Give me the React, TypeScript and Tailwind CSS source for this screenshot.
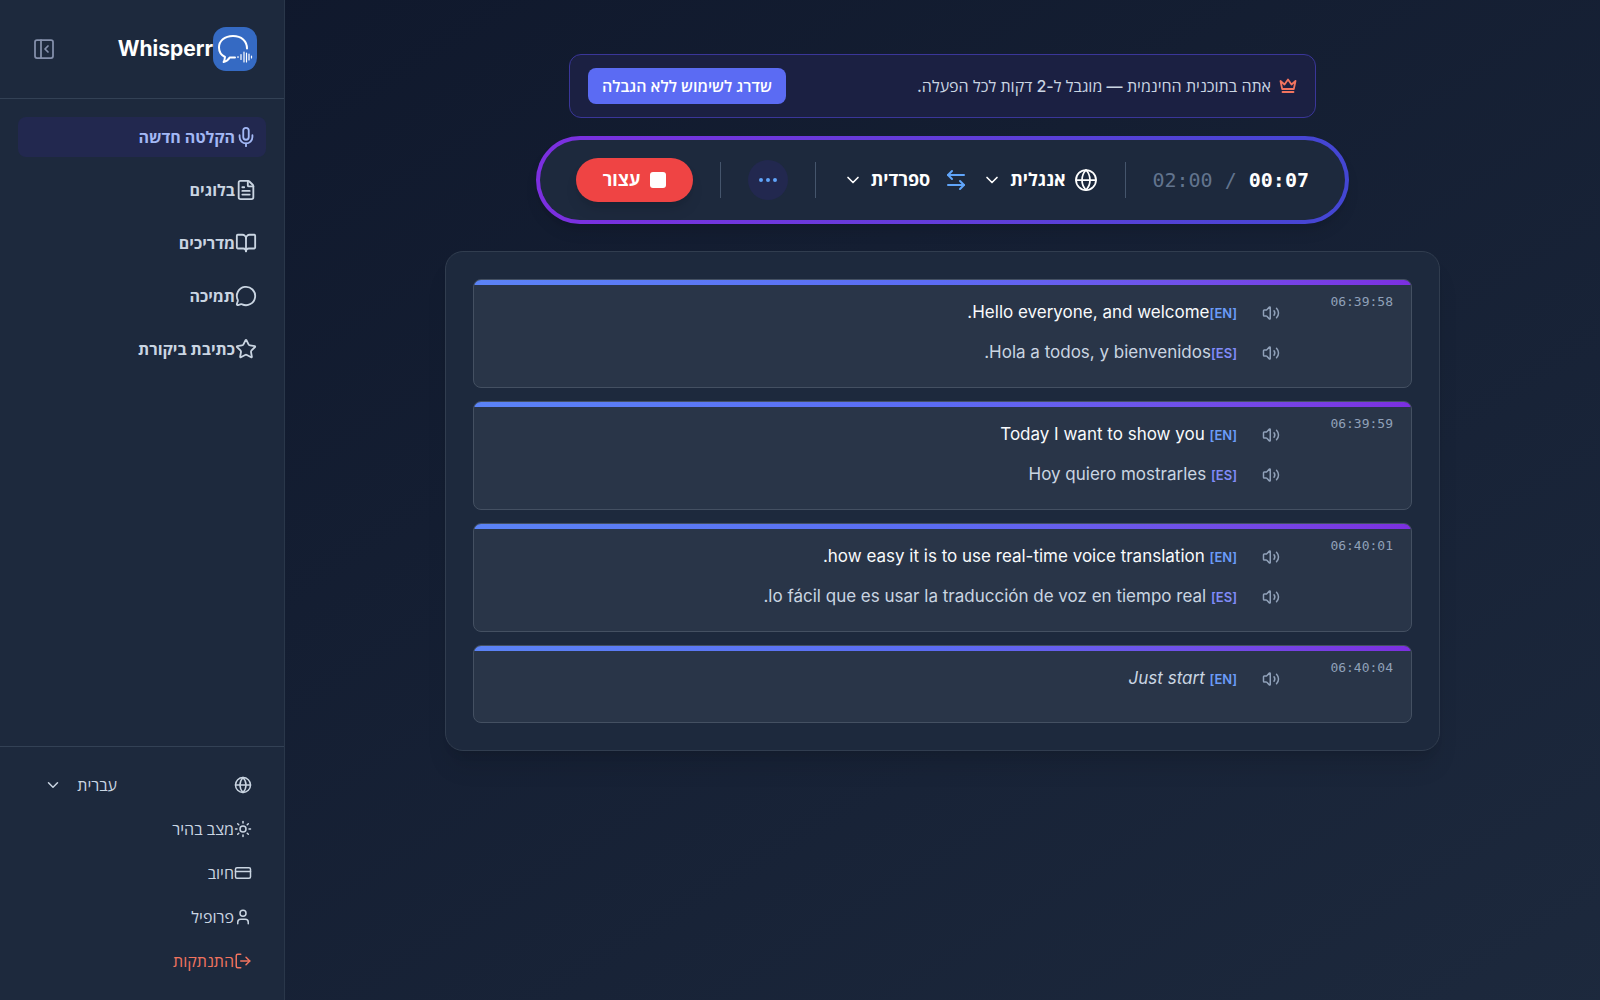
import React from "react";
import {
  ArrowLeftRight,
  BookOpen,
  ChevronDown,
  CreditCard,
  Ellipsis,
  FileText,
  Globe,
  LogOut,
  MessageCircle,
  Mic,
  PanelLeftClose,
  Star,
  Sun,
  User,
  Volume2,
} from "lucide-react";

type Line = { lang: "EN" | "ES"; text: string; interim?: boolean };
type Segment = { time: string; joined?: boolean; lines: Line[] };

const navItems = [
  { label: "הקלטה חדשה", icon: Mic, active: true },
  { label: "בלוגים", icon: FileText },
  { label: "מדריכים", icon: BookOpen },
  { label: "תמיכה", icon: MessageCircle },
  { label: "כתיבת ביקורת", icon: Star },
];

const accountItems = [
  { label: "מצב בהיר", icon: Sun },
  { label: "חיוב", icon: CreditCard },
  { label: "פרופיל", icon: User },
  { label: "התנתקות", icon: LogOut, danger: true },
];

const segments: Segment[] = [
  {
    time: "06:39:58",
    joined: true,
    lines: [
      { lang: "EN", text: "Hello everyone, and welcome." },
      { lang: "ES", text: "Hola a todos, y bienvenidos." },
    ],
  },
  {
    time: "06:39:59",
    lines: [
      { lang: "EN", text: "Today I want to show you" },
      { lang: "ES", text: "Hoy quiero mostrarles" },
    ],
  },
  {
    time: "06:40:01",
    lines: [
      { lang: "EN", text: "how easy it is to use real-time voice translation." },
      { lang: "ES", text: "lo fácil que es usar la traducción de voz en tiempo real." },
    ],
  },
  {
    time: "06:40:04",
    lines: [{ lang: "EN", text: "Just start", interim: true }],
  },
];

const Logo = () => (
  <svg width="44" height="44" viewBox="0 0 44 44" fill="none" stroke="white" strokeLinecap="round" strokeLinejoin="round">
    <rect width="44" height="44" rx="13" fill="#356ac3" stroke="none" />
    <path
      strokeWidth="2"
      d="M34 21.500C34 14 28.500 9 20 9S6 14 6 20.500c0 4 2 7.500 6 9.500-.2 2-.6 3.500-1.400 5 2.600-.6 4.700-2 6.100-4.500H22"
    />
    <path strokeWidth="1.200" d="M25 29.500v1M28 27.500v5M31 25v10M33.500 26v9M36 27v6M38.500 29v2" />
  </svg>
);

const Crown = () => (
  <svg
    width="18"
    height="16"
    viewBox="0 0 18 16"
    fill="none"
    stroke="currentColor"
    strokeWidth="1.800"
    strokeLinejoin="round"
    strokeLinecap="round"
    className="text-[#f2745f]"
  >
    <path d="M1.500 3l1.700 8h11.600l1.700-8-4 3.500L9 1.500 5.500 6.500zM3.500 14h11" />
  </svg>
);

const Sidebar = () => {
  return (
    <aside className="w-[285px] shrink-0 flex flex-col bg-slate-800 border-r border-[#2a374a]">
      <div className="h-[99px] flex items-center justify-between pr-[27px] pl-6 border-b border-[#334155]">
        <div className="flex items-center">
          <Logo />
          <span className="text-[21px] font-bold text-white">Whisperr</span>
        </div>
        <button aria-label="כווץ תפריט" className="p-2 text-[#8590ac]">
          <PanelLeftClose size={24} strokeWidth={1.75} />
        </button>
      </div>

      {/* NAV */}
      <nav className="flex-1 flex flex-col gap-[13px] px-[18px] pt-[18px]">
        {navItems.map(({ label, icon: Icon, active }) => (
          <a
            key={label}
            href="#"
            className={`h-10 flex items-center px-[9px] rounded-lg text-base font-bold ${
              active ? "bg-[#22284f] text-[#a3b8f5]" : "text-slate-300"
            }`}
          >
            <Icon size={22} />
            {label}
          </a>
        ))}
      </nav>

      {/* ACCOUNT */}
      <div className="flex flex-col gap-1 border-t border-[#334155] px-8 pt-[18px] pb-[19px]">
        <label className="relative h-10 flex items-center text-slate-300">
          <Globe size={18} />
          <select
            aria-label="שפה"
            className="appearance-none bg-transparent outline-none w-[168px] pr-[117px] text-base font-medium"
          >
            <option>עברית</option>
          </select>
          <ChevronDown size={18} className="absolute left-[12px] pointer-events-none" />
        </label>
        {accountItems.map(({ label, icon: Icon, danger }) => (
          <button
            key={label}
            className={`h-10 flex items-center text-base font-medium ${danger ? "text-[#f2745f]" : "text-slate-300"}`}
          >
            <Icon size={18} />
            {label}
          </button>
        ))}
      </div>
    </aside>
  );
};

const Divider = () => <div className="w-px h-9 bg-slate-600" />;

const SegmentCard = ({ segment }: { segment: Segment }) => {
  return (
    <article className="relative overflow-hidden flex rounded-lg border border-[#445062] bg-[#293548] px-[18px] pt-[13px] pb-[14px]">
      <div className="absolute inset-x-0 top-0 h-[5px] bg-linear-to-r from-[#5b83f6] via-[#5b6bf3] to-[#7c2fe0]" />
      <time className="w-[104px] shrink-0 pt-px font-[DejaVu_Sans_Mono,monospace] text-[13px] leading-4 text-slate-400">
        {segment.time}
      </time>
      <div className="flex-1 min-w-0 min-h-[49px]">
        {segment.lines.map((line) => (
          <div key={line.lang} className="h-10 flex items-center gap-4">
            <button aria-label="השמע" className="w-9 h-9 flex items-center justify-center text-slate-400">
              <Volume2 size={18} />
            </button>
            <p
              className={`text-[17px] ${
                line.interim ? "italic text-slate-300" : line.lang === "EN" ? "text-slate-50" : "text-slate-300"
              }`}
            >
              <span
                className={`text-[13px] font-semibold not-italic ${
                  line.lang === "EN" ? "text-[#6b9cf8]" : "text-[#818cf8]"
                }`}
              >
                [{line.lang}]
              </span>
              {segment.joined ? "" : " "}
              {line.text}
            </p>
          </div>
        ))}
      </div>
    </article>
  );
};

const App = () => {
  return (
    <div
      dir="rtl"
      className="min-h-screen flex flex-row-reverse bg-linear-to-br from-slate-900 to-slate-800 font-[Inter,Open_Sans,sans-serif]"
    >
      <Sidebar />
      <main className="flex-1 min-w-0 flex flex-col items-center px-6 pt-[54px] pb-10">
        {/* PLAN BANNER */}
        <section className="w-full max-w-[747px] h-16 flex items-center justify-between px-[18px] rounded-xl border border-[#3a3699] bg-[#1b2042]">
          <p className="flex items-center gap-2 text-base font-medium text-slate-300">
            <Crown />
            אתה בתוכנית החינמית — מוגבל ל-2 דקות לכל הפעלה.
          </p>
          <button className="h-9 px-[14px] rounded-lg bg-[#5b6bf3] text-base font-semibold text-white">
            שדרג לשימוש ללא הגבלה
          </button>
        </section>

        {/* CONTROLS */}
        <section className="mt-[18px] w-full max-w-[813px] rounded-full p-1 bg-linear-to-r from-[#7c2fe0] to-[#4346d3] shadow-lg">
          <div className="h-20 flex items-center justify-between px-9 rounded-full bg-slate-800">
            <p className="font-[DejaVu_Sans_Mono,monospace] text-xl text-slate-500" dir="ltr">
              02:00 / <span className="font-bold text-white">00:07</span>
            </p>
            <Divider />
            <div className="flex items-center gap-[14px]">
              <button className="flex items-center gap-2 text-lg font-bold text-white">
                <Globe size={24} strokeWidth={1.75} />
                אנגלית
                <ChevronDown size={20} />
              </button>
              <button aria-label="החלף שפות" className="text-[#60a5fa]">
                <ArrowLeftRight size={24} />
              </button>
              <button className="flex items-center gap-2 text-lg font-bold text-white">
                ספרדית
                <ChevronDown size={20} />
              </button>
            </div>
            <Divider />
            <button
              aria-label="עוד"
              className="w-10 h-10 flex items-center justify-center rounded-full bg-[#22284f] text-[#60a5fa]"
            >
              <Ellipsis size={24} />
            </button>
            <Divider />
            <button className="h-11 w-[117px] flex items-center justify-center gap-[10px] rounded-full bg-[#ef4444] text-lg font-bold text-white shadow-lg">
              <span className="w-4 h-4 rounded-[3px] bg-white" />
              עצור
            </button>
          </div>
        </section>

        {/* TRANSCRIPT */}
        <section className="mt-[27px] w-full max-w-[995px] flex flex-col gap-[13px] p-[27px] rounded-[18px] border border-[#313d4f] bg-slate-800 shadow-xl">
          {segments.map((segment) => (
            <SegmentCard key={segment.time} segment={segment} />
          ))}
        </section>
      </main>
    </div>
  );
};

export default App;
